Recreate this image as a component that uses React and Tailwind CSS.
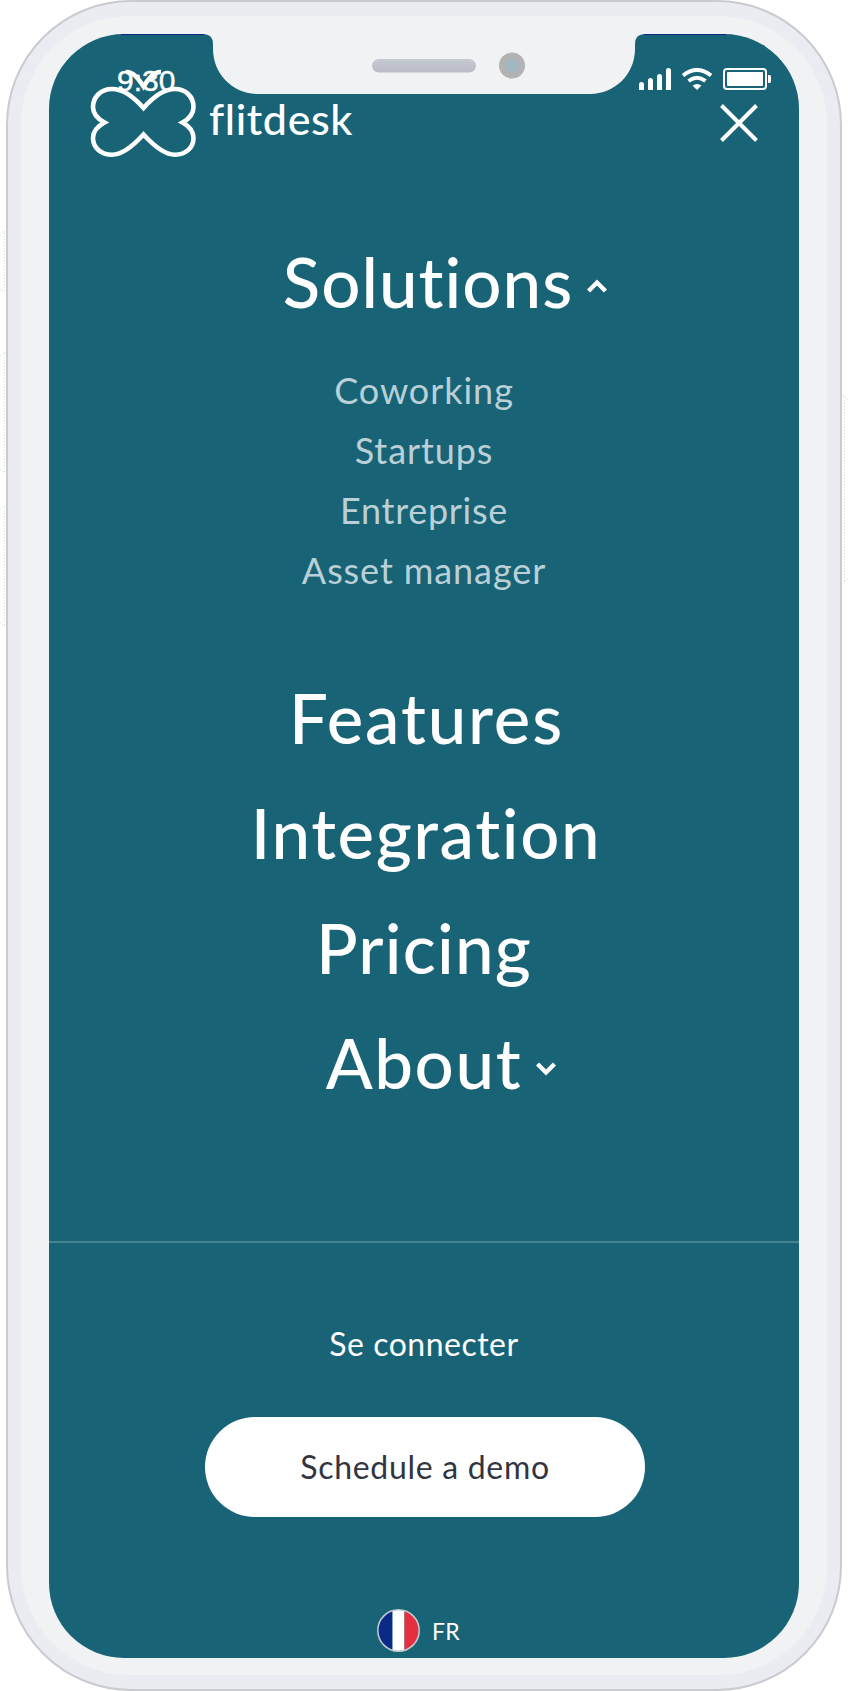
import React from "react";

function Hardware() {
  return (
    <svg className="pointer-events-none absolute inset-0" width="848" height="1691" viewBox="0 0 848 1691" fill="none">
      <g stroke="#d4d6d8" strokeWidth="1" strokeDasharray="1 2">
        <path d="M5.500 231.500H3.500L0 234.500M0 289l5 4.500M4.500 233v59" />
        <path d="M5.500 352.500H3.500L0 356M0 469l5 4.500M4.500 354v118" />
        <path d="M5.500 505.500H3.500L0 509M0 622l5 4.500M4.500 507v118" />
        <path d="M842.500 395.500h2l3.500 5M848 579l-5 3.500M844.500 397v184" />
      </g>
    </svg>
  );
}

function Notch() {
  return (
    <svg className="absolute left-0 top-0" width="750" height="62" viewBox="49 34 750 62" fill="none">
      <defs>
        <linearGradient id="speaker" x1="0" y1="0" x2="0" y2="1">
          <stop offset="0" stopColor="#c4cbd0" />
          <stop offset="1" stopColor="#bcbbc8" />
        </linearGradient>
      </defs>
      <path d="M121 34.500H205M643 34.500H726" stroke="#0b2a86" />
      <path d="M203 34Q213 34 213 44V49C213 74 233 94 258 94H590C615 94 635 74 635 49V44Q635 34 645 34Z" fill="#f1f2f4" />
      <rect x="372" y="59" width="104" height="13.500" rx="6.750" fill="url(#speaker)" />
      <circle cx="512" cy="65.500" r="13" fill="#b2b2b3" />
      <circle cx="512.500" cy="65.500" r="7" fill="#a0b7bf" />
    </svg>
  );
}

function StatusIcons() {
  return (
    <svg className="absolute left-[590px] top-[34px]" width="133" height="22" viewBox="639 68 133 22" fill="none">
      <g fill="#fff">
        <path d="M639 90v-5.500a2.500 2.500 0 0 1 5 0V90zM648 90v-9.500a2.500 2.500 0 0 1 5 0V90zM657 90v-13.500a2.500 2.500 0 0 1 5 0V90zM666 90v-19.500a2.500 2.500 0 0 1 5 0V90z" />
        <path d="M692.500 85.500Q697 82.500 701.500 85.500L697 90z" />
        <rect x="727" y="72" width="36" height="14" rx="1" />
        <path d="M768 75h1.500q1.500 0 1.500 2v4q0 2-1.500 2H768z" />
      </g>
      <path d="M683 75.500Q697 64.500 711 75.500M688.500 81Q697 74.500 705.500 81" stroke="#fff" strokeWidth="4" />
      <rect x="724" y="69" width="42" height="20" rx="3" stroke="#fff" strokeWidth="2" />
    </svg>
  );
}

function Butterfly() {
  return (
    <svg className="absolute left-[41px] top-[34px]" width="106" height="92" viewBox="90 68 106 92" fill="none" stroke="#fff">
      <path
        d="M143.500 108C133 96 122 89 112 89C101 89 93 97 93 107C93 114 98 119 104.500 122.500C98 126 93 131 93 138C93 147.500 101 154.700 112 154.700C122 154.700 133 146 143.500 134.500C154 146 165 154.700 175 154.700C186 154.700 193.500 147.500 193.500 138C193.500 131 189 126 182.500 122.500C189 119 193.500 114 193.500 107C193.500 97 186 89 175 89C165 89 154 96 143.500 108Z"
        strokeWidth="4.600"
      />
      <path d="M126 72C133 71.500 138 78 143.500 86.500C149 78 154 71.500 161 72" strokeWidth="4.600" />
    </svg>
  );
}

function Chevron({ up }) {
  return (
    <svg className={up ? "mt-[8px]" : "mt-[13px]"} width="20" height="14" viewBox="0 0 20 14" fill="none" stroke="#fff" strokeWidth="4.400">
      <path d={up ? "M1.500 12L10 3.500L18.500 12" : "M1.500 2L10 10.500L18.500 2"} />
    </svg>
  );
}

const solutions = [
  { label: "Coworking", style: "tracking-[0.95px]" },
  { label: "Startups", style: "tracking-[0.9px]" },
  { label: "Entreprise", style: "tracking-[0.7px]" },
  { label: "Asset manager", style: "tracking-[0.9px]" },
];

export default function App() {
  return (
    <div className="relative h-[1691px] w-[848px] overflow-hidden bg-white px-[6px] font-['Lato',sans-serif] text-white">
      <Hardware />
      <div className="h-[1691px] w-[836px] rounded-[125px] border-2 border-[#c9cbd0] bg-[#ebecf1] px-[13px] py-[14px]">
        <div className="h-[1659px] w-[806px] rounded-[108px] bg-[#f1f2f4] px-[28px] pt-[18px]">
          <div className="relative flex h-[1624px] w-[750px] flex-col items-center overflow-hidden rounded-[75px] bg-[#186476]">
            <Notch />
            <StatusIcons />
            <Butterfly />
            <span className="absolute left-[68px] top-[30px] font-['Liberation_Sans',sans-serif] text-[30px] leading-[33px] [-webkit-text-stroke:0.4px_white]">9:30</span>

            <header className="flex h-[190px] w-full justify-between pl-[160px] pr-[41px] pt-[60px]">
              <span className="text-[43px] leading-[50px] font-medium tracking-[0.6px]">flitdesk</span>
              <svg className="mt-[10px]" width="38" height="38" viewBox="0 0 38 38" stroke="#fff" strokeWidth="4">
                <path d="M1.500 1.500L36.500 36.500M36.500 1.500L1.500 36.500" />
              </svg>
            </header>

            <nav className="flex w-full flex-col items-center font-medium">
              <div className="flex h-[115px] items-center gap-[14px] pl-[42px] text-[69px] leading-[115px]">
                <span className="tracking-[1px]">Solutions</span>
                <Chevron up />
              </div>
              <ul className="mb-[60px] mt-[21px] text-center text-[36px] leading-[60px] font-normal text-[#bad0d6]">
                {solutions.map((s) => (
                  <li key={s.label} className={s.style}>{s.label}</li>
                ))}
              </ul>
              <span className="pl-[5px] text-[69px] leading-[115px] tracking-[1.8px]">Features</span>
              <span className="pl-[4px] text-[69px] leading-[115px] tracking-[1.6px]">Integration</span>
              <span className="text-[69px] leading-[115px] tracking-[1.2px]">Pricing</span>
              <div className="flex h-[115px] items-center gap-[14px] pl-[34px] text-[69px] leading-[115px]">
                <span className="tracking-[1.6px]">About</span>
                <Chevron />
              </div>
            </nav>

            <div className="mt-[121px] h-[2px] w-full shrink-0 bg-[#468391]" />
            <a className="mt-[79px] text-[32px] leading-[44px] tracking-[0.5px]">Se connecter</a>
            <button className="ml-[2px] mt-[51px] h-[100px] w-[440px] shrink-0 rounded-full bg-white text-[32px] leading-[44px] tracking-[0.7px] text-[#31353f]">
              Schedule a demo
            </button>
            <div className="mr-[11px] mt-[92px] flex items-center gap-3">
              <svg width="43" height="43" viewBox="0 0 43 43">
                <defs>
                  <clipPath id="flag"><circle cx="21.500" cy="21.500" r="20.500" /></clipPath>
                </defs>
                <g clipPath="url(#flag)">
                  <path fill="#0b2a86" d="M0 0h15.500v43H0z" />
                  <path fill="#fff" d="M15.500 0h12v43h-12z" />
                  <path fill="#e52e40" d="M27.500 0H43v43H27.500z" />
                </g>
                <circle cx="21.500" cy="21.500" r="20.700" fill="none" stroke="#c5ccd2" strokeWidth="1.500" />
              </svg>
              <span className="text-[23px] leading-[30px] tracking-[0.3px]">FR</span>
            </div>
          </div>
        </div>
      </div>
    </div>
  );
}
